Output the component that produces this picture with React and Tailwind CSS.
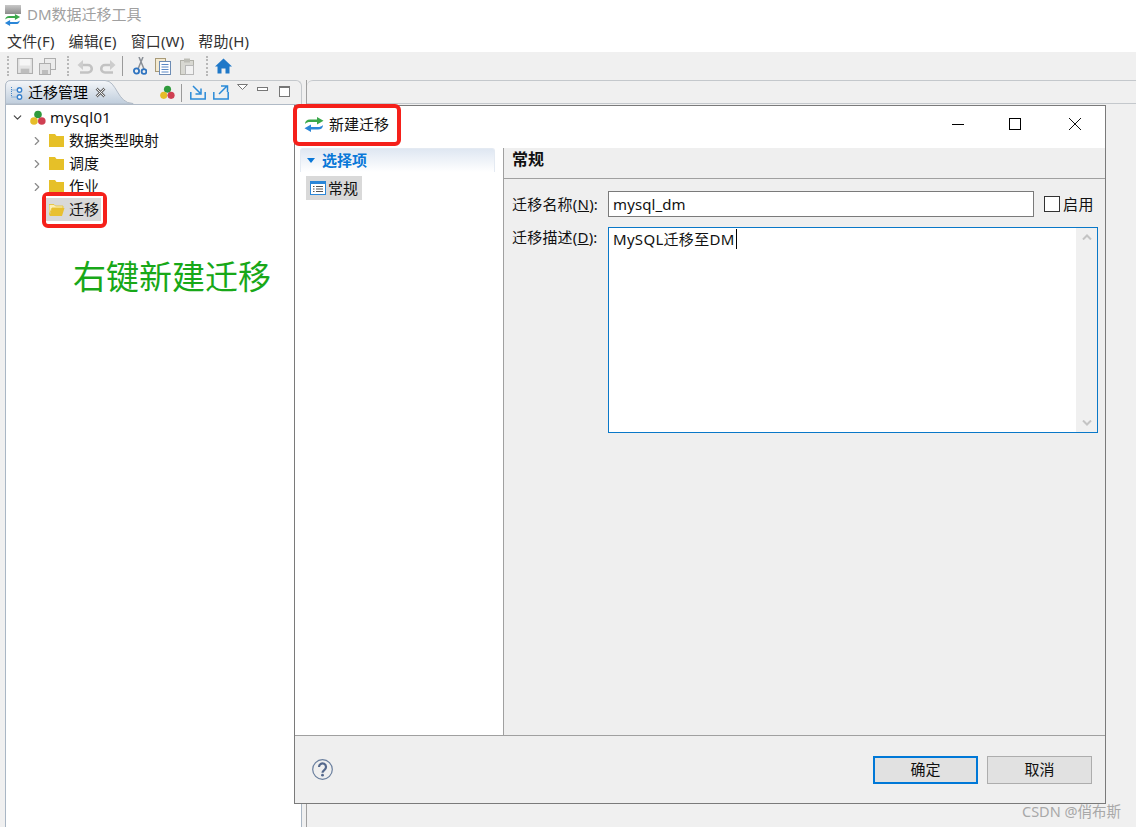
import { ChevronDown, ChevronRight } from 'lucide-react';

const font = { fontFamily: '"Noto Sans", "Noto Sans CJK SC", sans-serif' };

function Folder({ open }) {
    if (open) {
        return (
            <svg width="16" height="14" viewBox="0 0 16 14" className="-mr-px shrink-0">
                <path d="M0 1.500h5l1.500 1.500H14v2H3L0 12z" fill="#fbeeb8" stroke="#e6c02c" strokeWidth="0.800" />
                <path d="M3 5h12.500L13 13H0.500z" fill="#e8c030" />
            </svg>
        );
    }
    return (
        <svg width="15" height="13" viewBox="0 0 15 13" className="shrink-0">
            <path d="M0 0h6l1.500 2H15v11H0z" fill="#e6c028" />
        </svg>
    );
}

function Cluster({ size = 16 }) {
    return (
        <svg width={size} height={size} viewBox="0 0 16 16">
            <circle cx="8" cy="4.500" r="3.800" fill="#2f9a3c" />
            <circle cx="4" cy="11" r="3.800" fill="#e6bd2a" />
            <circle cx="11.800" cy="11" r="3.800" fill="#cf3f52" />
        </svg>
    );
}

// two opposing arrows, used on the app title and the dialog title
function SwapArrows({ width = 20, height = 15 }) {
    return (
        <svg width={width} height={height} viewBox="0 0 20 15">
            <path d="M1 7C1 4 3 2.500 6 2.500h7V0l6.500 3.700L13 7.400V5H6C4 5 2.500 5.500 1 7z" fill="#3aa84a" />
            <path d="M19 8c0 3-2 4.500-5 4.500H7V15L0.500 11.300 7 7.600V10h7c2 0 3.500-.5 5-2z" fill="#2a86d8" />
        </svg>
    );
}

function Grip() {
    return <div className="h-[20px] w-[3px] border-l-2 border-dotted border-[#b8b8b8]" />;
}

function Toolbar() {
    return (
        <div className="flex h-[28px] items-center bg-[#f0f0f0] pl-[7px]">
            <Grip />
            <svg width="16" height="16" viewBox="0 0 15 15" className="ml-[7px]">
                <rect x="0.500" y="0.500" width="14" height="14" fill="#e4e4e4" stroke="#aeaeae" />
                <rect x="2.500" y="1" width="10" height="6" fill="#f6f6f6" />
                <rect x="3.500" y="10" width="8" height="4.500" fill="#bdbdbd" />
            </svg>
            <svg width="17" height="17" viewBox="0 0 17 17" className="ml-[6px]">
                <rect x="5.500" y="0.500" width="11" height="11" fill="#ececec" stroke="#aeaeae" />
                <rect x="0.500" y="5.500" width="11" height="11" fill="#e4e4e4" stroke="#aeaeae" />
                <rect x="3" y="12" width="6" height="4" fill="#bdbdbd" />
            </svg>
            <div className="ml-[11px]"><Grip /></div>
            <svg width="16" height="15" viewBox="0 0 16 15" fill="none" className="ml-[7px]">
                <path d="M4 6 H11 a3.500 3.500 0 0 1 0 7.500 H3" stroke="#c2c2c2" strokeWidth="2.600" />
                <path d="M0.500 6 L6 1 V11z" fill="#cdcdcd" />
            </svg>
            <svg width="16" height="15" viewBox="0 0 16 15" fill="none" className="ml-[7px]">
                <path d="M12 6 H5 a3.500 3.500 0 0 0 0 7.500 H13" stroke="#c2c2c2" strokeWidth="2.600" />
                <path d="M15.500 6 L10 1 V11z" fill="#cdcdcd" />
            </svg>
            <div className="ml-[6px] h-[20px] w-px bg-[#9a9a9a]" />
            <svg width="14" height="18" viewBox="0 0 14 18" fill="none" className="ml-[10px]">
                <path d="M10 0 L5 12 M6 0 L11 12" stroke="#8a8f96" strokeWidth="1.500" />
                <circle cx="3.500" cy="14" r="2.600" stroke="#2f74c0" strokeWidth="1.800" />
                <circle cx="11" cy="14.500" r="2.400" stroke="#2f74c0" strokeWidth="1.800" />
            </svg>
            <svg width="16" height="17" viewBox="0 0 16 17" className="ml-[8px]">
                <rect x="0.500" y="0.500" width="10" height="13" fill="#f4ead0" stroke="#a89a78" />
                <rect x="4.500" y="3.500" width="11" height="13" fill="#fff" stroke="#6d8cb4" />
                <path d="M6.500 6.500h7M6.500 9h7M6.500 11.500h7M6.500 14h7" stroke="#5b88c4" />
            </svg>
            <svg width="14" height="17" viewBox="0 0 14 17" className="ml-[9px]">
                <rect x="0.500" y="2.500" width="13" height="14" fill="#d8d8d2" stroke="#b0b0a8" />
                <rect x="4" y="0.500" width="6" height="4" fill="#bdbdb6" />
                <rect x="5.500" y="7.500" width="8" height="9" fill="#f2f2f2" stroke="#b8b8b8" />
            </svg>
            <div className="ml-[12px]"><Grip /></div>
            <svg width="17" height="16" viewBox="0 0 17 16" className="ml-[6px]">
                <path d="M8.500 0.500 L17 8.500 H14.500 V15.500 H10.500 V10.500 H6.500 V15.500 H2.500 V8.500 H0z" fill="#1f78c8" />
            </svg>
        </div>
    );
}

function TabBar() {
    return (
        <div className="relative flex h-[24px] items-center rounded-t-[6px] border border-b-0 border-[#c4c8cc] bg-[#f0f0f0]">
            <svg width="130" height="24" viewBox="0 0 130 24" className="absolute left-[-1px] top-[-1px]">
                <defs>
                    <linearGradient id="tabFill" x1="0" y1="0" x2="0" y2="1">
                        <stop offset="0" stopColor="#f4f6f9" />
                        <stop offset="1" stopColor="#bfcddc" />
                    </linearGradient>
                </defs>
                <path d="M0.500 24V6Q0.500 0.500 6 0.500H100C112 0.500 112 23.500 128 23.500V24z" fill="url(#tabFill)" stroke="#b0bac6" />
            </svg>
            <div className="relative flex items-center pl-[4px]">
                <svg width="13" height="14" viewBox="0 0 13 14" fill="none" className="shrink-0">
                    <path d="M1.500 1v10h6M1.500 4h6" stroke="#4a88c8" strokeDasharray="1 1" />
                    <circle cx="9.500" cy="4" r="2.200" fill="#fff" stroke="#3a82cc" strokeWidth="1.400" />
                    <circle cx="9.500" cy="11" r="2.200" fill="#fff" stroke="#3a82cc" strokeWidth="1.400" />
                </svg>
                <span className="ml-[5px] text-[15px] leading-none text-black">迁移管理</span>
                <svg width="11" height="11" viewBox="0 0 11 11" className="ml-[7px]">
                    <path d="M1.500 1.500l8 8M9.500 1.500l-8 8" stroke="#666" strokeWidth="2.600" />
                    <path d="M1.500 1.500l8 8M9.500 1.500l-8 8" stroke="#f0f0f0" strokeWidth="1" />
                </svg>
            </div>
            <div className="relative ml-[54px]"><Cluster size={15} /></div>
            <div className="ml-[6px] h-[18px] w-px bg-[#9a9a9a]" />
            <svg width="16" height="15" viewBox="0 0 16 15" fill="none" className="ml-[8px]">
                <path d="M0.800 7v7h14.400V7" stroke="#2a8ad8" strokeWidth="1.500" />
                <path d="M3 1 L10 8 M11 3.500V9H5.500" stroke="#2a8ad8" strokeWidth="1.500" />
            </svg>
            <svg width="16" height="15" viewBox="0 0 16 15" fill="none" className="ml-[7px]">
                <path d="M0.800 7v7h14.400V7" stroke="#2a8ad8" strokeWidth="1.500" />
                <path d="M6 9 L14 1 M8 1h6.500v6" stroke="#2a8ad8" strokeWidth="1.500" />
            </svg>
            <svg width="11" height="6" viewBox="0 0 11 6" fill="none" className="mb-[12px] ml-[8px]">
                <path d="M0.500 0.500h10L5.500 5.500z" fill="#fff" stroke="#777" />
            </svg>
            <div className="mb-[8px] ml-[9px] h-[4px] w-[11px] border border-[#777] bg-white" />
            <div className="mb-[2px] ml-[11px] h-[11px] w-[11px] border border-t-2 border-[#777] bg-white" />
        </div>
    );
}

function TreeRow({ label, children, open, selected }) {
    return (
        <div className="flex h-[23px] items-center pl-[27px]">
            <div className="w-[13px] shrink-0">
                {!open && <ChevronRight size={14} strokeWidth={2} color="#8a8a8a" className="-ml-[3px]" />}
            </div>
            <div className={`flex h-[23px] items-center gap-[5px] pl-[3px] pr-[2px] ${selected ? 'bg-[#d9d9d9]' : ''}`}>
                {children}
                <span className="text-[15px] leading-none text-[#111]">{label}</span>
            </div>
        </div>
    );
}

function MigrationPanel() {
    return (
        <div className="flex h-full w-[297px] flex-col">
            <TabBar />
            <div className="flex-1 border-x border-t border-x-[#a9b6c4] border-t-[#b0bac6] bg-white pt-px">
                <div className="flex h-[23px] items-center pl-[5px]">
                    <ChevronDown size={13} strokeWidth={2.200} color="#444" />
                    <div className="ml-[6px]"><Cluster /></div>
                    <span className="ml-[4px] text-[15px] leading-none tracking-[0.300px] text-[#111]">mysql01</span>
                </div>
                <TreeRow label="数据类型映射"><Folder /></TreeRow>
                <TreeRow label="调度"><Folder /></TreeRow>
                <TreeRow label="作业"><Folder /></TreeRow>
                <TreeRow label="迁移" open selected><Folder open /></TreeRow>
                <div className="mt-[34px] pl-[67px] text-[33px] leading-[44px] text-[#18a818]">右键新建迁移</div>
            </div>
        </div>
    );
}

function Dialog() {
    return (
        <div className="absolute left-[294px] top-[105px] flex h-[699px] w-[812px] flex-col border-[1.500px] border-[#7a7a7a] bg-[#efefef]">
            <div className="flex h-[42px] shrink-0 items-center bg-white pb-[6px] pl-[9px]">
                <SwapArrows />
                <span className="ml-[5px] text-[15px] leading-none text-[#111]">新建迁移</span>
                <div className="ml-auto flex h-full items-center">
                    <div className="mr-[45px] h-px w-[12px] bg-black" />
                    <div className="mr-[47px] h-[12px] w-[12px] border border-black" />
                    <svg width="14" height="14" viewBox="0 0 14 14" className="mr-[23px]">
                        <path d="M1 1l12 12M13 1L1 13" stroke="#111" strokeWidth="1" />
                    </svg>
                </div>
            </div>
            <div className="flex min-h-0 flex-1 border-b border-[#a0a0a0]">
                <div className="w-[209px] shrink-0 border-r border-[#a0a0a0] bg-white px-[5px]">
                    <div className="flex h-[24px] w-[195px] items-center rounded-t-[3px] border border-b-0 border-[#e4eaf2] bg-gradient-to-b from-[#dfe7f2] to-white pl-[6px]">
                        <svg width="8" height="5" viewBox="0 0 8 5"><path d="M0 0h8L4 5z" fill="#0a78d8" /></svg>
                        <span className="ml-[7px] text-[15px] font-bold leading-none text-[#0a78d8]">选择项</span>
                    </div>
                    <div className="ml-[6px] mt-[4px] flex h-[24px] w-[56px] items-center bg-[#d9d9d9] pl-[4px]">
                        <svg width="16" height="14" viewBox="0 0 16 14" fill="none">
                            <rect x="0.500" y="0.500" width="15" height="13" fill="#fff" stroke="#2a86d8" />
                            <rect x="0.500" y="0.500" width="15" height="2.500" fill="#2a86d8" />
                            <path d="M3 5.500h1.500M6 5.500h7M3 8h1.500M6 8h7M3 10.500h1.500M6 10.500h7" stroke="#555" />
                        </svg>
                        <span className="ml-[2px] text-[15px] leading-none text-[#111]">常规</span>
                    </div>
                </div>
                <div className="flex min-w-0 flex-1 flex-col">
                    <div className="flex h-[31px] shrink-0 items-center border-b border-[#a0a0a0] pb-[9px] pl-[8px] text-[16px] font-bold leading-none text-[#111]">常规</div>
                    <div className="grid grid-cols-[96px_1fr] grid-rows-[26px_206px] gap-y-[10px] pl-[8px] pr-[7px] pt-[12px] text-[15px] leading-none text-[#111]">
                        <div className="flex h-[26px] items-center whitespace-nowrap tracking-[0.200px]">迁移名称(<span className="underline">N</span>):</div>
                        <div className="flex items-center">
                            <div className="flex h-[26px] w-[426px] items-center border border-[#7a7a7a] bg-white pl-[4px] tracking-[0.100px]">mysql_dm</div>
                            <div className="ml-[10px] h-[16px] w-[16px] shrink-0 border border-[#333] bg-white" />
                            <span className="ml-[3px] whitespace-nowrap tracking-[0.500px]">启用</span>
                        </div>
                        <div className="whitespace-nowrap pt-[3px] tracking-[0.200px]">迁移描述(<span className="underline">D</span>):</div>
                        <div className="flex border border-[#0a78c8] bg-white">
                            <div className="flex-1 pl-[4px] pt-[4px]">
                                <span className="border-r border-black pr-px tracking-[0.300px]">MySQL迁移至DM</span>
                            </div>
                            <div className="flex w-[21px] flex-col items-center justify-between bg-[#f0f0f0] py-[6px]">
                                <svg width="10" height="6" viewBox="0 0 10 6" fill="none"><path d="M1 5.500l4-4 4 4" stroke="#c4c4c4" strokeWidth="2" /></svg>
                                <svg width="10" height="6" viewBox="0 0 10 6" fill="none"><path d="M1 0.500l4 4 4-4" stroke="#c4c4c4" strokeWidth="2" /></svg>
                            </div>
                        </div>
                    </div>
                </div>
            </div>
            <div className="flex h-[67px] shrink-0 items-center pl-[17px] pr-[13px]">
                <svg width="21" height="21" viewBox="0 0 21 21" fill="none">
                    <circle cx="10.500" cy="10.500" r="9.800" stroke="#6a7f9e" strokeWidth="1.200" />
                    <path d="M7 8a3.500 3.500 0 1 1 5.500 2.800c-1.300 1-2 1.400-2 3" stroke="#54688c" strokeWidth="2.200" />
                    <circle cx="10.500" cy="16.200" r="1.400" fill="#54688c" />
                </svg>
                <div className="ml-auto flex gap-[9px] text-[15px] leading-none text-[#111]">
                    <div className="flex h-[28px] w-[105px] items-center justify-center border-2 border-[#0078d7] bg-[#e1e1e1]">确定</div>
                    <div className="flex h-[28px] w-[105px] items-center justify-center border border-[#adadad] bg-[#e1e1e1]">取消</div>
                </div>
            </div>
        </div>
    );
}

export default function App() {
    return (
        <div className="relative flex h-[827px] w-[1136px] flex-col overflow-hidden bg-[#f0f0f0]" style={font}>
            <div className="flex h-[30px] items-center bg-white pl-[3px]">
                <div className="flex w-[19px] flex-col items-center">
                    <div className="h-[9px] w-[16px] bg-gradient-to-b from-[#c8c8c8] to-[#8c8c8c]" />
                    <SwapArrows width={19} height={12} />
                </div>
                <span className="ml-[5px] pb-[2px] text-[15px] leading-none text-[#a0a0a0]">DM数据迁移工具</span>
            </div>
            <div className="flex h-[22px] items-center gap-[14px] bg-white pl-[7px] text-[15px] leading-none tracking-[0.150px] text-[#333]">
                <span>文件(F)</span>
                <span>编辑(E)</span>
                <span>窗口(W)</span>
                <span>帮助(H)</span>
            </div>
            <Toolbar />
            <div className="flex min-h-0 flex-1 pl-[5px]">
                <MigrationPanel />
                <div className="ml-[4px] flex-1 border-l border-[#a0a0a0]">
                    <div className="h-[24px] rounded-tl-[6px] border-y border-[#c4c8cc] bg-[#f0f0f0]" />
                </div>
            </div>
            <Dialog />
            <div className="pointer-events-none absolute left-[293px] top-[104px] h-[42px] w-[108px] rounded-[6px] border-[4px] border-[#f5201a]" />
            {/* the annotation box was pasted over the row above, so its white inside hides the bottom of 作业 */}
            <div className="pointer-events-none absolute left-[42px] top-[192px] h-[36px] w-[65px] rounded-[6px] border-[4px] border-[#f5201a]">
                <div className="h-[2px] bg-white" />
            </div>
            <div className="absolute left-[1022px] top-[802px] text-[14.500px] leading-[19px] text-[#a8a8a8]">CSDN @俏布斯</div>
        </div>
    );
}
